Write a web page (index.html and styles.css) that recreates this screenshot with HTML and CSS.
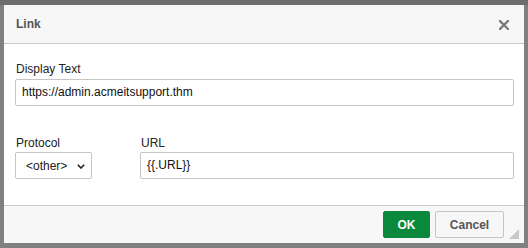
FILE: index.html
```html
<!DOCTYPE html>
<html lang="en">
<head>
    <meta charset="UTF-8">
    <meta name="viewport" content="width=device-width, initial-scale=1.0">
    <title>Link</title>
    <link rel="stylesheet" href="styles.css">
</head>
<body>
    <div class="topbar"></div>
    <div class="backdrop">
        <div class="dialog">
            <div class="dialog-head">
                <span class="dialog-title">Link</span>
                <svg class="close" width="10" height="10" viewBox="0 0 10 10">
                    <path d="M1 1 L9 9 M9 1 L1 9" stroke="#7b7b7b" stroke-width="2.4" stroke-linecap="square"/>
                </svg>
            </div>
            <div class="dialog-body">
                <label class="field-label">Display Text</label>
                <div class="text-input">https://admin.acmeitsupport.thm</div>

                <div class="row">
                    <div class="col-protocol">
                        <label class="field-label">Protocol</label>
                        <div class="select-box">
                            <span>&lt;other&gt;</span>
                            <svg width="8" height="5" viewBox="0 0 8 5">
                                <path d="M0.8 0.8 L4 4 L7.2 0.8" fill="none" stroke="#222" stroke-width="1.6"/>
                            </svg>
                        </div>
                    </div>
                    <div class="col-url">
                        <label class="field-label">URL</label>
                        <div class="text-input">{{.URL}}</div>
                    </div>
                </div>
            </div>
            <div class="dialog-foot">
                <button class="btn btn-ok">OK</button>
                <button class="btn btn-cancel">Cancel</button>
            </div>
            <div class="resize-handle"></div>
        </div>
    </div>
</body>
</html>
```

FILE: styles.css
```css
* {
    box-sizing: border-box;
}
body {
    margin: 0;
    background: #808080;
    font-family: "Liberation Sans", Arial, sans-serif;
    font-size: 12px;
    height: 248px;
    overflow: hidden;
}
.topbar {
    height: 5px;
    background: #6d6d6d;
}
.backdrop {
    padding-left: 4px;
}
.dialog {
    position: relative;
    width: 520px;
    height: 238px;
    background: #fff;
    display: flex;
    flex-direction: column;
}
.dialog-head {
    height: 39px;
    flex-shrink: 0;
    background: #f7f7f7;
    border-bottom: 1px solid #c9c9c9;
    display: flex;
    align-items: center;
    justify-content: space-between;
    padding: 0 15px 0 12px;
}
.dialog-title {
    font-weight: bold;
    color: #555;
    font-size: 12px;
}
.close {
    margin-top: 2px;
}
.dialog-body {
    flex: 1;
    padding: 18px 10px 0 11px;
}
.field-label {
    display: block;
    color: #222;
    line-height: 14px;
    padding-left: 1px;
    margin-bottom: 3px;
}
.text-input {
    height: 27px;
    border: 1px solid #c5c5c5;
    border-radius: 2px;
    line-height: 25px;
    padding-left: 6px;
    color: #111;
}
.row {
    display: flex;
    gap: 48px;
    margin-top: 30px;
}
.row .field-label {
    margin-bottom: 2px;
}
.col-protocol {
    width: 77px;
}
.col-url {
    flex: 1;
}
.select-box {
    height: 27px;
    border: 1px solid #c5c5c5;
    border-radius: 2px;
    display: flex;
    align-items: center;
    justify-content: space-between;
    padding: 0 6px 0 10px;
    color: #222;
}
.select-box svg {
    margin-top: 1px;
}
.dialog-foot {
    height: 38px;
    flex-shrink: 0;
    background: #f7f7f7;
    border-top: 1px solid #c9c9c9;
    display: flex;
    justify-content: flex-end;
    align-items: flex-start;
    gap: 5px;
    padding: 5px 20px 0 0;
}
.btn {
    height: 27px;
    font-family: "Liberation Sans", Arial, sans-serif;
    font-size: 12px;
    font-weight: bold;
    border-radius: 2px;
    padding: 0;
}
.btn-ok {
    width: 47px;
    background: #0a893d;
    border: 1px solid #0a893d;
    color: #fff;
}
.btn-cancel {
    width: 69px;
    background: #f7f7f7;
    border: 1px solid #c5c5c5;
    color: #555;
}
.resize-handle {
    position: absolute;
    right: 5px;
    bottom: 4px;
    width: 0;
    height: 0;
    border-left: 10px solid transparent;
    border-bottom: 10px solid #c8c8c8;
}
```
